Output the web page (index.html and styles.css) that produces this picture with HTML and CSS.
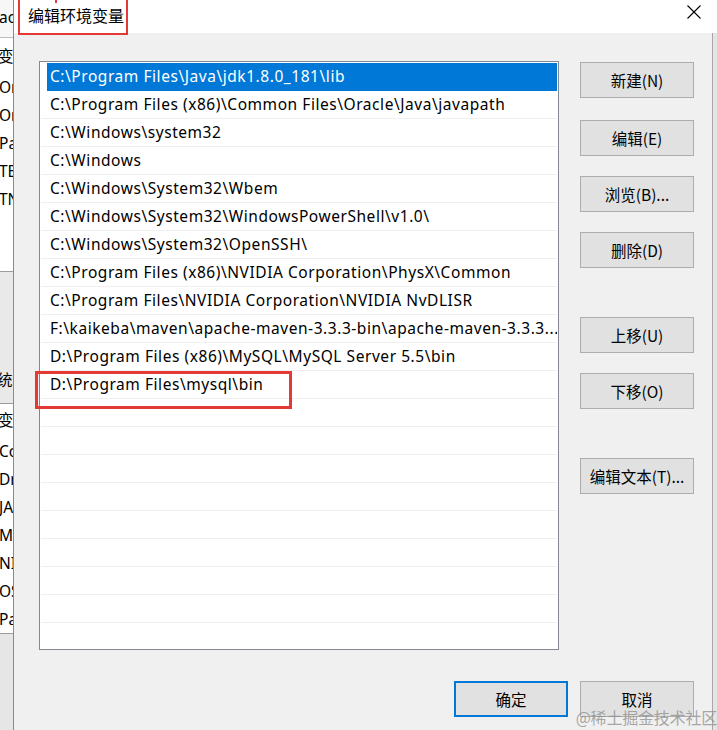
FILE: index.html
```html
<!DOCTYPE html>
<html lang="zh-CN">
<head>
<meta charset="utf-8">
<title>编辑环境变量</title>
<link rel="stylesheet" href="styles.css">
</head>
<body>
<div class="desktop">
  <aside class="bgwin">
    <div class="bg-title">ao</div>
    <div class="bg-head">变</div>
    <div class="bg-list">
      <div class="bg-row">Or</div>
      <div class="bg-row">Or</div>
      <div class="bg-row">Pa</div>
      <div class="bg-row">TE</div>
      <div class="bg-row">TN</div>
    </div>
    <div class="bg-gap"></div>
    <div class="bg-group">统</div>
    <div class="bg-head bg-head2">变</div>
    <div class="bg-list bg-list2">
      <div class="bg-row">Co</div>
      <div class="bg-row">Dr</div>
      <div class="bg-row">JA</div>
      <div class="bg-row">M</div>
      <div class="bg-row">NI</div>
      <div class="bg-row">OS</div>
      <div class="bg-row">Pa</div>
    </div>
    <div class="bg-bottom"></div>
  </aside>

  <section class="dialog">
    <header class="titlebar">
      <span class="title">编辑环境变量</span>
      <span class="mark-tick"></span>
      <button class="close" aria-label="关闭">
        <svg width="14" height="14" viewBox="0 0 14 14"><path d="M0.5 0.5 L13.5 13.5 M13.5 0.5 L0.5 13.5" stroke="#000" stroke-width="1.1" fill="none"/></svg>
      </button>
    </header>
    <div class="main">
      <div class="content">
        <div class="top">
          <div class="listbox">
            <div class="row selected">C:\Program Files\Java\jdk1.8.0_181\lib</div>
            <div class="row">C:\Program Files (x86)\Common Files\Oracle\Java\javapath</div>
            <div class="row">C:\Windows\system32</div>
            <div class="row">C:\Windows</div>
            <div class="row">C:\Windows\System32\Wbem</div>
            <div class="row">C:\Windows\System32\WindowsPowerShell\v1.0\</div>
            <div class="row">C:\Windows\System32\OpenSSH\</div>
            <div class="row">C:\Program Files (x86)\NVIDIA Corporation\PhysX\Common</div>
            <div class="row">C:\Program Files\NVIDIA Corporation\NVIDIA NvDLISR</div>
            <div class="row">F:\kaikeba\maven\apache-maven-3.3.3-bin\apache-maven-3.3.3...</div>
            <div class="row">D:\Program Files (x86)\MySQL\MySQL Server 5.5\bin</div>
            <div class="row">D:\Program Files\mysql\bin</div>
            <div class="row"></div>
            <div class="row"></div>
            <div class="row"></div>
            <div class="row"></div>
            <div class="row"></div>
            <div class="row"></div>
            <div class="row"></div>
            <div class="row"></div>
            <div class="row"></div>
            <div class="highlight-box"></div>
          </div>
          <div class="side">
            <button class="btn b-new">新建(N)</button>
            <button class="btn b-edit">编辑(E)</button>
            <button class="btn b-browse">浏览(B)...</button>
            <button class="btn b-del">删除(D)</button>
            <button class="btn b-up">上移(U)</button>
            <button class="btn b-down">下移(O)</button>
            <button class="btn b-text">编辑文本(T)...</button>
          </div>
        </div>
        <div class="footer">
          <button class="btn primary">确定</button>
          <button class="btn">取消</button>
        </div>
      </div>
      <div class="edge"></div>
    </div>
  </section>
  <div class="watermark">@稀土掘金技术社区</div>
</div>
</body>
</html>
```

FILE: styles.css
```css
* { box-sizing: border-box; }
html, body {
  margin: 0;
  padding: 0;
  width: 717px;
  height: 730px;
  overflow: hidden;
  background: #f0f0f0;
}
body {
  font-family: "Noto Sans", "Noto Sans CJK SC", sans-serif;
  color: #000;
}
.desktop {
  position: relative;
  display: flex;
  width: 717px;
  height: 730px;
}

/* background window on the left */
.bgwin {
  width: 14px;
  flex: none;
  display: flex;
  flex-direction: column;
  overflow: hidden;
  border-right: 1px solid #8a8a8a;
  background: #f0f0f0;
  font-size: 15.5px;
  white-space: nowrap;
}
.bg-title {
  height: 38px;
  line-height: 34px;
  background: #f7f7f7;
  border-bottom: 1px solid #bcbcbc;
  text-indent: -1px;
}
.bg-head {
  height: 35px;
  line-height: 36px;
  background: #fff;
  text-indent: -2px;
}
.bg-list { background: #fff; }
.bg-row {
  height: 28px;
  line-height: 28px;
  text-indent: -1px;
}
.bg-gap {
  height: 59px;
  background: #fff;
  border-bottom: 1px solid #9c9c9c;
}
.bg-group {
  height: 132px;
  background: #e9e9e9;
  border-bottom: 1px solid #9c9c9c;
  line-height: 1;
  padding-top: 101px;
  text-indent: -3px;
}
.bg-head2 {
  height: 33px;
  line-height: 32px;
}
.bg-bottom {
  flex: 1;
  border-top: 1px solid #9c9c9c;
  background: #e6e6e6;
}

/* dialog */
.dialog {
  flex: 1;
  display: flex;
  flex-direction: column;
}
.titlebar {
  position: relative;
  height: 33px;
  background: #fff;
  display: flex;
  align-items: center;
  padding-left: 12px;
}
.title {
  font-family: "Noto Sans CJK SC", sans-serif;
  font-size: 16px;
  padding: 0 2px 4px 8px;
  margin-left: -8px;
  height: 35px;
  display: flex;
  align-items: center;
  border: 2px solid #e53935;
  border-top: none;
  position: relative;
  top: 1px;
}
.mark-tick {
  position: absolute;
  left: 41px;
  top: 0;
  width: 2px;
  height: 3px;
  background: #e53935;
}
.close {
  margin-left: auto;
  margin-right: 16px;
  background: none;
  border: none;
  padding: 0;
  width: 14px;
  height: 14px;
  display: flex;
  margin-top: -9px;
}

.main {
  flex: 1;
  display: flex;
}
.content {
  flex: 1;
  padding: 28px 0 0 25px;
  display: flex;
  flex-direction: column;
}
.edge {
  width: 5px;
  flex: none;
  border-left: 1px solid #a8a8a8;
  background: #e4e4e4;
}
.top {
  display: flex;
  gap: 21px;
}
.listbox {
  position: relative;
  width: 520px;
  height: 589px;
  border: 1px solid #828790;
  background: #fff;
  padding: 1px 1px 0 1px;
}
.row {
  height: 28px;
  border-bottom: 1px solid #f0f0f0;
  font-size: 15.5px;
  letter-spacing: 0.55px;
  line-height: 27px;
  padding-left: 9px;
  white-space: nowrap;
  overflow: hidden;
}
.row.selected {
  background: #0078d7;
  color: #fff;
  margin-left: 6px;
  padding-left: 3px;
  border-bottom-color: #0078d7;
}
.highlight-box {
  position: absolute;
  left: -5px;
  top: 309px;
  width: 257px;
  height: 38px;
  border: 3px solid #e53935;
}

.side {
  display: flex;
  flex-direction: column;
  padding-top: 1px;
}
.btn {
  width: 114px;
  height: 36px;
  background: #e1e1e1;
  border: 1px solid #adadad;
  font-family: "Noto Sans CJK SC", sans-serif;
  font-size: 15.5px;
  color: #000;
  padding: 0;
}
.b-edit { margin-top: 22px; }
.b-browse { margin-top: 20px; }
.b-del { margin-top: 20px; }
.b-up { margin-top: 49px; }
.b-down { margin-top: 20px; }
.b-text { margin-top: 49px; }

.footer {
  display: flex;
  justify-content: flex-end;
  gap: 12px;
  margin-top: 31px;
  padding-right: 18px;
}
.primary {
  border: 2px solid #0078d7;
}

.watermark {
  position: absolute;
  right: 0;
  bottom: 3px;
  font-family: "Noto Sans CJK SC", sans-serif;
  font-size: 16px;
  line-height: 20px;
  color: rgba(140, 140, 140, 0.75);
  letter-spacing: -0.2px;
  pointer-events: none;
}
```
